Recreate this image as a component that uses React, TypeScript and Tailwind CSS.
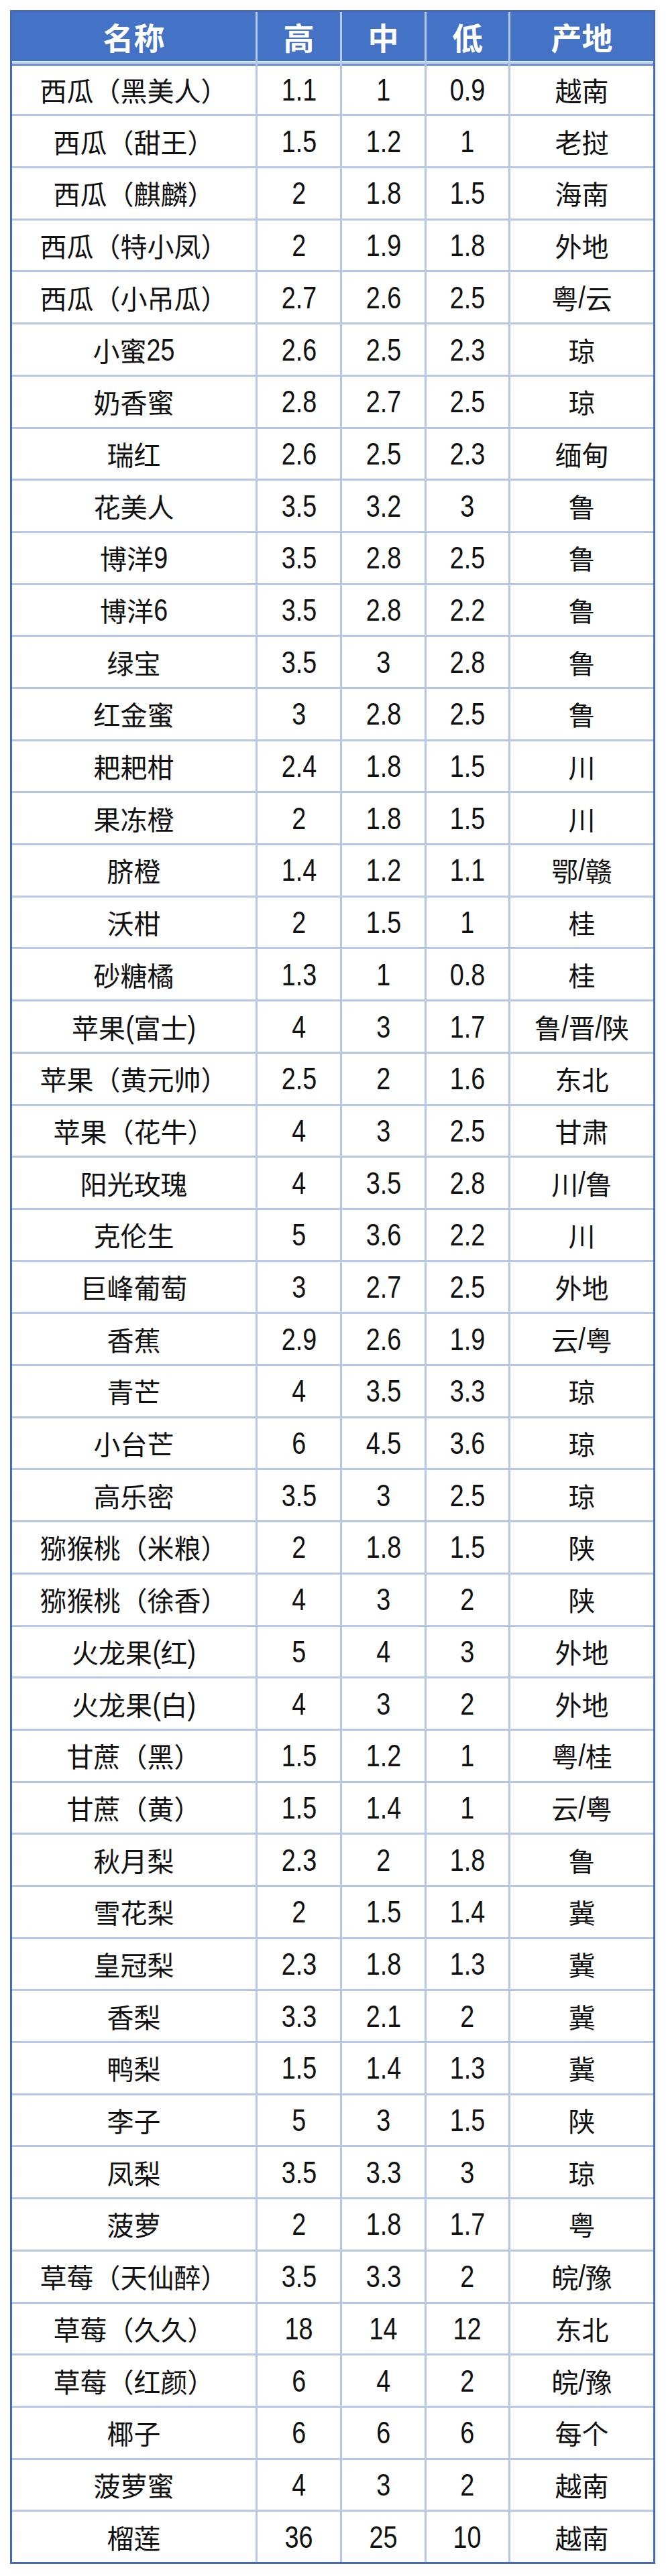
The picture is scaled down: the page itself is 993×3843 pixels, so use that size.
import React from "react";

type Row = [string, string, string, string, string];

const rows: Row[] = [
  ["西瓜（黑美人）", "1.1", "1", "0.9", "越南"],
  ["西瓜（甜王）", "1.5", "1.2", "1", "老挝"],
  ["西瓜（麒麟）", "2", "1.8", "1.5", "海南"],
  ["西瓜（特小凤）", "2", "1.9", "1.8", "外地"],
  ["西瓜（小吊瓜）", "2.7", "2.6", "2.5", "粤/云"],
  ["小蜜25", "2.6", "2.5", "2.3", "琼"],
  ["奶香蜜", "2.8", "2.7", "2.5", "琼"],
  ["瑞红", "2.6", "2.5", "2.3", "缅甸"],
  ["花美人", "3.5", "3.2", "3", "鲁"],
  ["博洋9", "3.5", "2.8", "2.5", "鲁"],
  ["博洋6", "3.5", "2.8", "2.2", "鲁"],
  ["绿宝", "3.5", "3", "2.8", "鲁"],
  ["红金蜜", "3", "2.8", "2.5", "鲁"],
  ["耙耙柑", "2.4", "1.8", "1.5", "川"],
  ["果冻橙", "2", "1.8", "1.5", "川"],
  ["脐橙", "1.4", "1.2", "1.1", "鄂/赣"],
  ["沃柑", "2", "1.5", "1", "桂"],
  ["砂糖橘", "1.3", "1", "0.8", "桂"],
  ["苹果(富士)", "4", "3", "1.7", "鲁/晋/陕"],
  ["苹果（黄元帅）", "2.5", "2", "1.6", "东北"],
  ["苹果（花牛）", "4", "3", "2.5", "甘肃"],
  ["阳光玫瑰", "4", "3.5", "2.8", "川/鲁"],
  ["克伦生", "5", "3.6", "2.2", "川"],
  ["巨峰葡萄", "3", "2.7", "2.5", "外地"],
  ["香蕉", "2.9", "2.6", "1.9", "云/粤"],
  ["青芒", "4", "3.5", "3.3", "琼"],
  ["小台芒", "6", "4.5", "3.6", "琼"],
  ["高乐密", "3.5", "3", "2.5", "琼"],
  ["猕猴桃（米粮）", "2", "1.8", "1.5", "陕"],
  ["猕猴桃（徐香）", "4", "3", "2", "陕"],
  ["火龙果(红)", "5", "4", "3", "外地"],
  ["火龙果(白)", "4", "3", "2", "外地"],
  ["甘蔗（黑）", "1.5", "1.2", "1", "粤/桂"],
  ["甘蔗（黄）", "1.5", "1.4", "1", "云/粤"],
  ["秋月梨", "2.3", "2", "1.8", "鲁"],
  ["雪花梨", "2", "1.5", "1.4", "冀"],
  ["皇冠梨", "2.3", "1.8", "1.3", "冀"],
  ["香梨", "3.3", "2.1", "2", "冀"],
  ["鸭梨", "1.5", "1.4", "1.3", "冀"],
  ["李子", "5", "3", "1.5", "陕"],
  ["凤梨", "3.5", "3.3", "3", "琼"],
  ["菠萝", "2", "1.8", "1.7", "粤"],
  ["草莓（天仙醉）", "3.5", "3.3", "2", "皖/豫"],
  ["草莓（久久）", "18", "14", "12", "东北"],
  ["草莓（红颜）", "6", "4", "2", "皖/豫"],
  ["椰子", "6", "6", "6", "每个"],
  ["菠萝蜜", "4", "3", "2", "越南"],
  ["榴莲", "36", "25", "10", "越南"],
];

const FS = 46;
const SCALE = 0.82;

function asciiWidth(s: string): number {
  let w = 0;
  for (const ch of s) {
    if (/[0-9]/.test(ch)) w += 0.556;
    else if (ch === "." || ch === "/") w += 0.278;
    else if (ch === "(" || ch === ")") w += 0.333;
    else w += 0.5;
  }
  return w * FS;
}

function CellText({ text }: { text: string }) {
  const parts = text.split(/([\x00-\x7f]+)/).filter((p) => p.length > 0);
  return (
    <span className="whitespace-nowrap leading-none flex items-center">
      {parts.map((p, i) => {
        if (/^[\x00-\x7f]+$/.test(p)) {
          const m = (-(1 - SCALE) * asciiWidth(p)) / 2;
          return (
            <span
              key={i}
              className="inline-block text-[46px] leading-none font-['Liberation_Sans',Arial,sans-serif] scale-x-[0.82] origin-center"
              style={{ marginLeft: m, marginRight: m }}
            >
              {p}
            </span>
          );
        }
        return (
          <span
            key={i}
            className="inline-block text-[40px] leading-none font-['Noto_Sans_CJK_SC',sans-serif]"
          >
            {p}
          </span>
        );
      })}
    </span>
  );
}

export default function App() {
  const headers = ["名称", "高", "中", "低", "产地"];
  return (
    <div className="w-[993px] h-[3843px] bg-white pt-[15px] pl-[15px]">
      <div className="w-[962px] h-[3810px] border-[3px] border-[#4569bf] bg-[#b6c6e6] grid grid-cols-[363px_123px_123px_122px_1fr] grid-rows-[repeat(49,minmax(0,1fr))] gap-[3px] text-[#111111]">
        {headers.map((h) => (
          <div
            key={h}
            className="bg-[#4472c4] flex items-center justify-center text-white text-[46px] font-bold font-['Noto_Sans_CJK_SC',sans-serif] leading-none border-b-2 border-[#d2ecfa]"
          >
            {h}
          </div>
        ))}
        {rows.map((r, ri) =>
          r.map((c, ci) => (
            <div
              key={`${ri}-${ci}`}
              className={
                ri === 0
                  ? "bg-white flex items-center justify-center border-t-2 border-[#5b7cc8]"
                  : "bg-white flex items-center justify-center"
              }
            >
              <CellText text={c} />
            </div>
          ))
        )}
      </div>
    </div>
  );
}
